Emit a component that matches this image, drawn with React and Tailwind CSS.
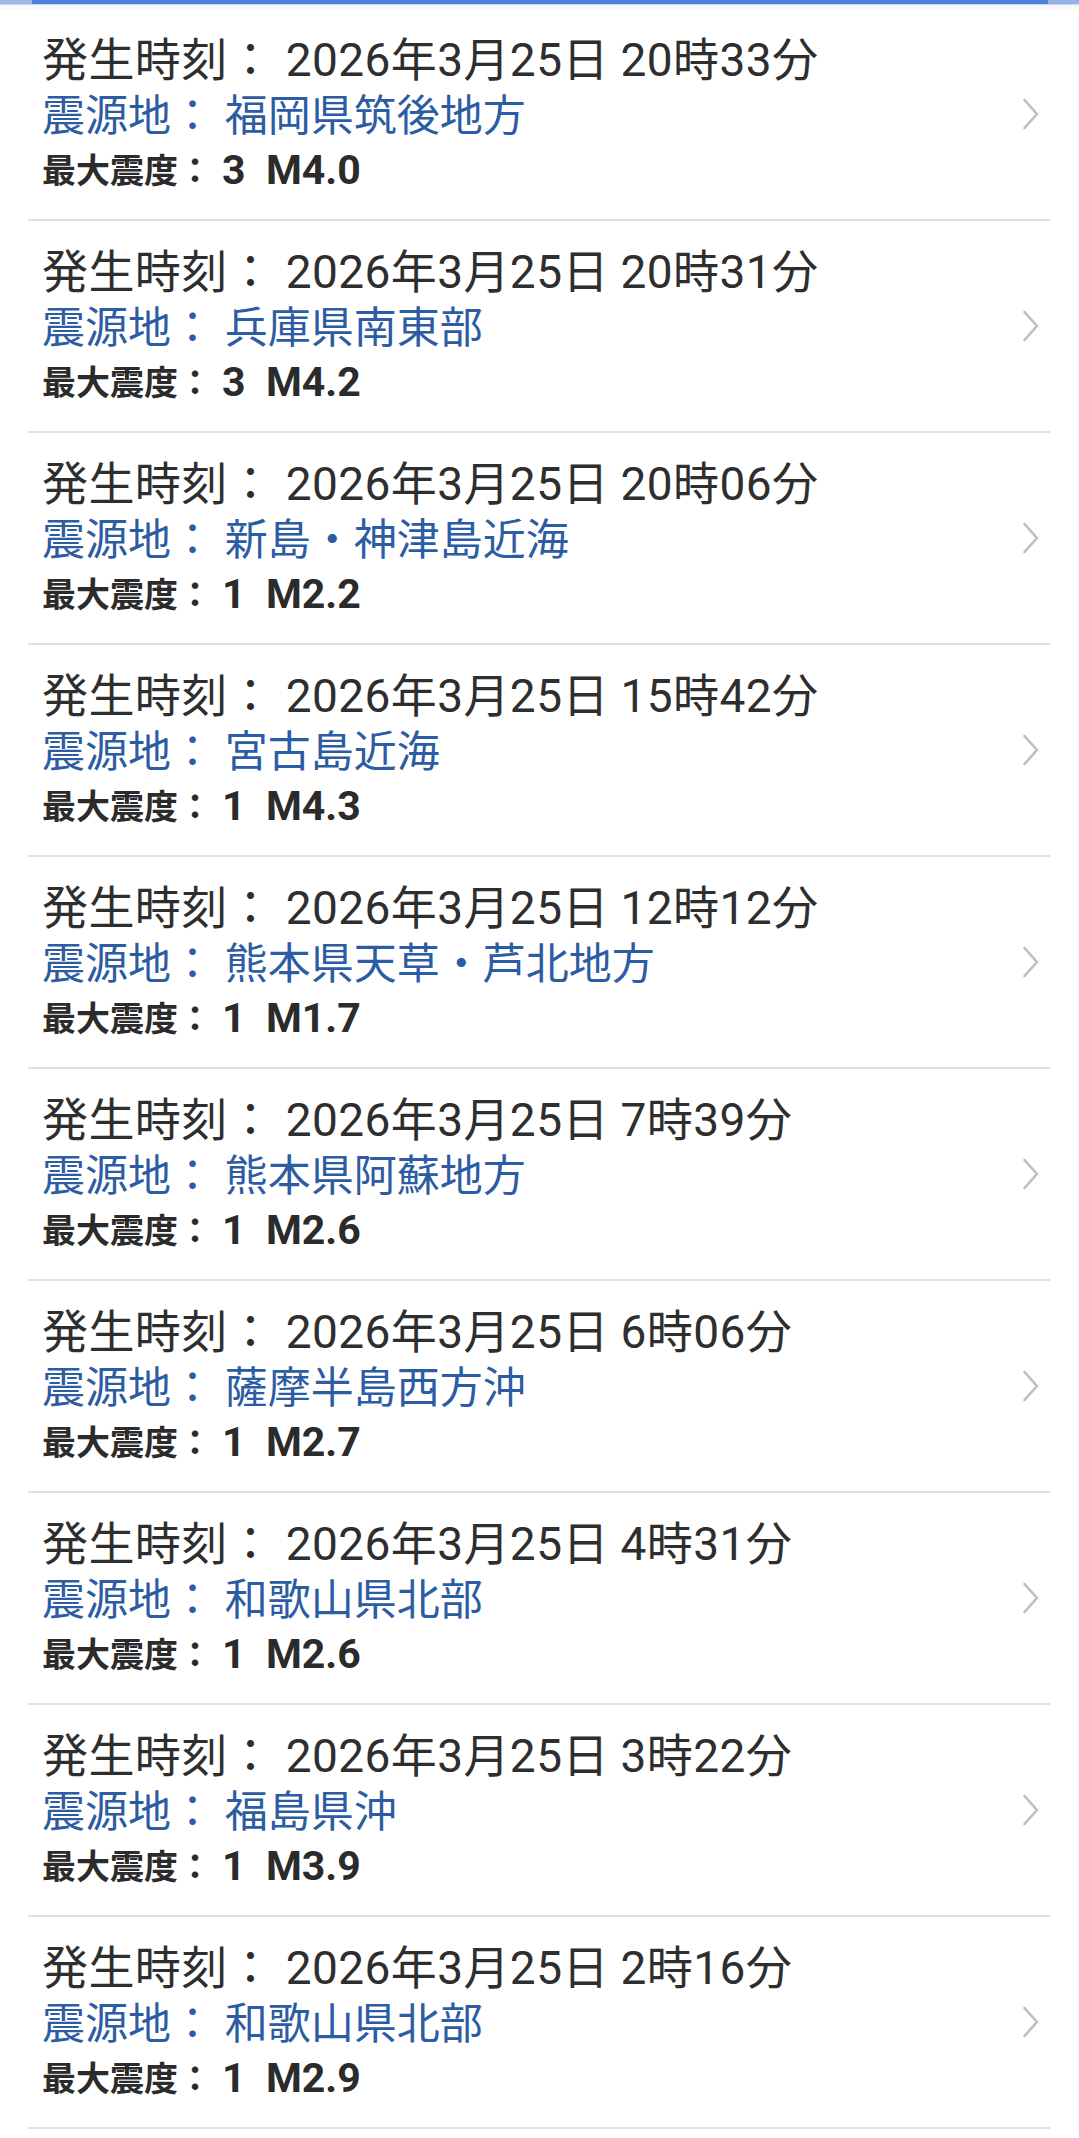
import React from 'react';

const quakes = [
  { time: '20時33分', place: '福岡県筑後地方', shindo: '3', mag: 'M4.0' },
  { time: '20時31分', place: '兵庫県南東部', shindo: '3', mag: 'M4.2' },
  { time: '20時06分', place: '新島・神津島近海', shindo: '1', mag: 'M2.2' },
  { time: '15時42分', place: '宮古島近海', shindo: '1', mag: 'M4.3' },
  { time: '12時12分', place: '熊本県天草・芦北地方', shindo: '1', mag: 'M1.7' },
  { time: '7時39分', place: '熊本県阿蘇地方', shindo: '1', mag: 'M2.6' },
  { time: '6時06分', place: '薩摩半島西方沖', shindo: '1', mag: 'M2.7' },
  { time: '4時31分', place: '和歌山県北部', shindo: '1', mag: 'M2.6' },
  { time: '3時22分', place: '福島県沖', shindo: '1', mag: 'M3.9' },
  { time: '2時16分', place: '和歌山県北部', shindo: '1', mag: 'M2.9' },
];

const Chevron = () => (
  <svg width="18" height="32" viewBox="0 0 18 32" fill="none" className="shrink-0 mr-[10px]">
    <polyline points="2.5,2 15,16 2.5,30" stroke="#bdbdbd" strokeWidth="2.6" strokeLinecap="round" strokeLinejoin="round" />
  </svg>
);

const QuakeRow = ({ q }) => (
  <div className="ml-[28px] w-[1022px] flex items-center border-b-2 border-[#e0e0e0]">
    <div className="flex-1 pl-[14px] pt-[23px] pb-[21px]">
      <div className="text-[46px] leading-[56px] tracking-[0.4px] text-[#2e2e2e] whitespace-pre">
        {'発生時刻：\u00a02026年3月25日 ' + q.time}
      </div>
      <div className="text-[43px] leading-[56px] text-[#2c5ca3] whitespace-pre">
        {'震源地：\u00a0' + q.place}
      </div>
      <div className="h-[54px] flex items-center font-bold text-[#2b2b2b] whitespace-pre">
        <span className="text-[34px]">最大震度：</span>
        <span className="text-[41px] ml-[10px]">{q.shindo + '\u00a0\u00a0' + q.mag}</span>
      </div>
    </div>
    <Chevron />
  </div>
);

export default function App() {
  return (
    <div className="min-h-[2138px] bg-white font-['Roboto','Noto_Sans_CJK_JP',sans-serif]">
      <div className="flex h-[4px]">
        <div className="w-[32px] bg-[#9db8e6]" />
        <div className="flex-1 bg-[#4b81d6]" />
        <div className="w-[31px] bg-[#93b2e5]" />
      </div>
      <div className="h-[1px] bg-[#cad9f1]" />
      <div className="h-[4px] bg-[#f7f8fb]" />
      <div>
        {quakes.map((q, i) => (
          <QuakeRow key={i} q={q} />
        ))}
      </div>
    </div>
  );
}
